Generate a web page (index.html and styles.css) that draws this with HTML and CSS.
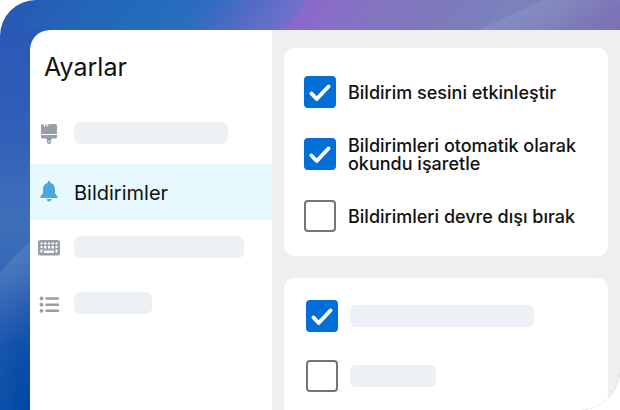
FILE: index.html
```html
<!DOCTYPE html>
<html lang="tr">
<head>
    <meta charset="UTF-8">
    <meta name="viewport" content="width=device-width, initial-scale=1">
    <title>Ayarlar</title>
    <link rel="stylesheet" href="styles.css">
</head>
<body>
    <div class="desktop">
        <div class="window">
            <nav class="sidebar">
                <h1>Ayarlar</h1>
                <ul class="menu">
                    <li class="menu-item">
                        <svg class="icon" viewBox="0 0 22 22">
                            <path d="M3 3L4.500 2L6 3V4.500L7 5L7.500 2L8.500 2V4L9.500 4.500L10 2H11V4L12 2H17.500L19 3V12H3Z"/>
                            <path d="M3 13H19V15Q19 16.500 17 16.500H14L13 18V20Q13 22 11 22Q9 22 9 20V18L8 16.500H5Q3 16.500 3 15Z"/>
                            <circle cx="11" cy="19.500" r="0.800" fill="#fff"/>
                        </svg>
                        <span class="placeholder w-154"></span>
                    </li>
                    <li class="menu-item active">
                        <svg class="icon" viewBox="0 0 22 22">
                            <path d="M11 0Q12.500 0 12.500 2C16 3 17 6 17 9V12.500L19.500 15.500V17H2.500V15.500L5 12.500V9C5 6 6 3 9.500 2Q9.500 0 11 0Z"/>
                            <path d="M8.500 18H13.500Q12.800 20.500 11 20.500Q9.200 20.500 8.500 18Z"/>
                        </svg>
                        <a href="#bildirimler">Bildirimler</a>
                    </li>
                    <li class="menu-item">
                        <svg class="icon" viewBox="0 0 22 22">
                            <rect x="0" y="4" width="22" height="15.500" rx="2.500"/>
                            <path d="M2.500 6.500h2v2h-2zM6 6.500h2.500v2H6zM10 6.500h2v2h-2zM13.500 6.500H16v2h-2.500zM17.500 6.500h2v2h-2zM2.500 10h2v2h-2zM6 10h2.500v2.500H6zM10 10h2v2.500h-2zM13.500 10H16v2.500h-2.500zM17.500 10h2v2h-2zM2.500 13.500h2v3h-2zM6 14.500h10v2.500H6zM17.500 13.500h2v3h-2z" fill="#fff"/>
                        </svg>
                        <span class="placeholder w-170"></span>
                    </li>
                    <li class="menu-item">
                        <svg class="icon" viewBox="0 0 22 22">
                            <circle cx="3.500" cy="6.500" r="1.900"/>
                            <circle cx="3.500" cy="12.700" r="1.900"/>
                            <circle cx="3.500" cy="18.800" r="1.900"/>
                            <path d="M8.500 6.500H20M8.500 12.700H20M8.500 18.800H20" stroke="#969fa8" stroke-width="2.400" stroke-linecap="round"/>
                        </svg>
                        <span class="placeholder w-78"></span>
                    </li>
                </ul>
            </nav>
            <main class="content">
                <section class="card">
                    <label class="option">
                        <input type="checkbox" checked>
                        <span class="option-text">Bildirim sesini etkinleştir</span>
                    </label>
                    <label class="option">
                        <input type="checkbox" checked>
                        <span class="option-text">Bildirimleri otomatik olarak okundu işaretle</span>
                    </label>
                    <label class="option">
                        <input type="checkbox">
                        <span class="option-text">Bildirimleri devre dışı bırak</span>
                    </label>
                </section>
                <section class="card card-more">
                    <label class="option">
                        <input type="checkbox" aria-label="Seçenek 1" checked>
                        <span class="placeholder w-184"></span>
                    </label>
                    <label class="option">
                        <input type="checkbox" aria-label="Seçenek 2">
                        <span class="placeholder w-86"></span>
                    </label>
                </section>
            </main>
        </div>
    </div>
</body>
</html>
```
FILE: styles.css
```css
* {
    box-sizing: border-box;
}
body {
    margin: 0;
    background: #fff;
    color: #111;
    font-family: Inter, "Liberation Sans", sans-serif;
}

/* wallpaper */
.desktop {
    display: flex;
    min-height: 100vh;
    padding: 30px 0 0 30px;
    overflow: hidden;
    border-radius: 36px 0 40px 0;
    background:
        linear-gradient(155deg, transparent 30px, rgba(255, 255, 255, 0.08) 32px, transparent 70px) 100% 0 / 150px 30px no-repeat,
        linear-gradient(127deg, #2956b5 0%, #2465b8 14%, #236cbb 25%, #2f6cc0 33%, #4a6bc4 38%, #7470ca 47.8%, #8a68cc 48%, #8672c2 57%, #7f78bc 68%, #7a82bc 80%, #7c80ba 88%, #7c70b5 100%) 0 0 / 100% 30px no-repeat,
        radial-gradient(circle at 130px 370px, transparent 110px, rgba(255, 255, 255, 0.1) 161px, transparent 163px) 0 0 / 30px 100% no-repeat,
        linear-gradient(to bottom, #2956b5 0, #2f5fb8 120px, #3f6fb8 220px, #3468b6 270px, #2259b0 310px, #0f50aa 345px, #0048a5 100%);
}

.window {
    display: flex;
    flex: 1;
    overflow: hidden;
    border-radius: 20px 0 0 0;
    background: #fff;
}

/* left menu */
.sidebar {
    flex: 0 0 242px;
}
.sidebar h1 {
    margin: 22px 14px;
    font-size: 25px;
    font-weight: 400;
    line-height: 31px;
}
.menu {
    margin: 0;
    padding: 0;
    list-style: none;
}
.menu-item {
    display: flex;
    align-items: center;
    gap: 14px;
    height: 56px;
    padding: 0 8px;
}
.menu-item.active {
    margin: 3px 0 -1px;
    background: #e8f8ff;
}
.menu-item a {
    padding-top: 2px;
    color: #111;
    font-size: 20px;
    line-height: 24px;
    text-decoration: none;
}
.icon {
    width: 22px;
    height: 22px;
    fill: #969fa8;
}
.active .icon {
    fill: #48a8e0;
}

/* settings */
.content {
    display: flex;
    flex: 1;
    flex-direction: column;
    gap: 22px;
    padding: 18px 12px 0;
    background: #efefef;
}
.card {
    display: flex;
    flex-direction: column;
    gap: 24px;
    padding: 25px 20px 21px;
    border-radius: 10px;
    background: #fff;
}
.card-more {
    flex: 1;
    gap: 22px;
    padding: 19px 22px 0;
    border-radius: 10px 10px 0 0;
}
.option {
    display: flex;
    align-items: center;
    gap: 12px;
    min-height: 38px;
}
.option-text {
    padding-top: 2px;
    font-size: 18px;
    font-weight: 500;
    line-height: 18px;
}
.option input {
    flex: none;
    width: 32px;
    height: 32px;
    margin: 0;
    border: 2px solid #757575;
    border-radius: 4px;
    background: #fff;
    appearance: none;
}
.option input:checked {
    border-color: #0070d8;
    background: #0070d8 url("data:image/svg+xml,%3Csvg xmlns='http://www.w3.org/2000/svg' viewBox='0 0 28 28'%3E%3Cpath d='M5.500 15.500L10.700 21L22.500 8.500' fill='none' stroke='white' stroke-width='4' stroke-linecap='round' stroke-linejoin='round'/%3E%3C/svg%3E") center / 28px no-repeat;
}

.placeholder {
    height: 22px;
    border-radius: 6px;
    background: #edf1f5;
}
.w-78 { width: 78px; }
.w-86 { width: 86px; }
.w-154 { width: 154px; }
.w-170 { width: 170px; }
.w-184 { width: 184px; }
```
